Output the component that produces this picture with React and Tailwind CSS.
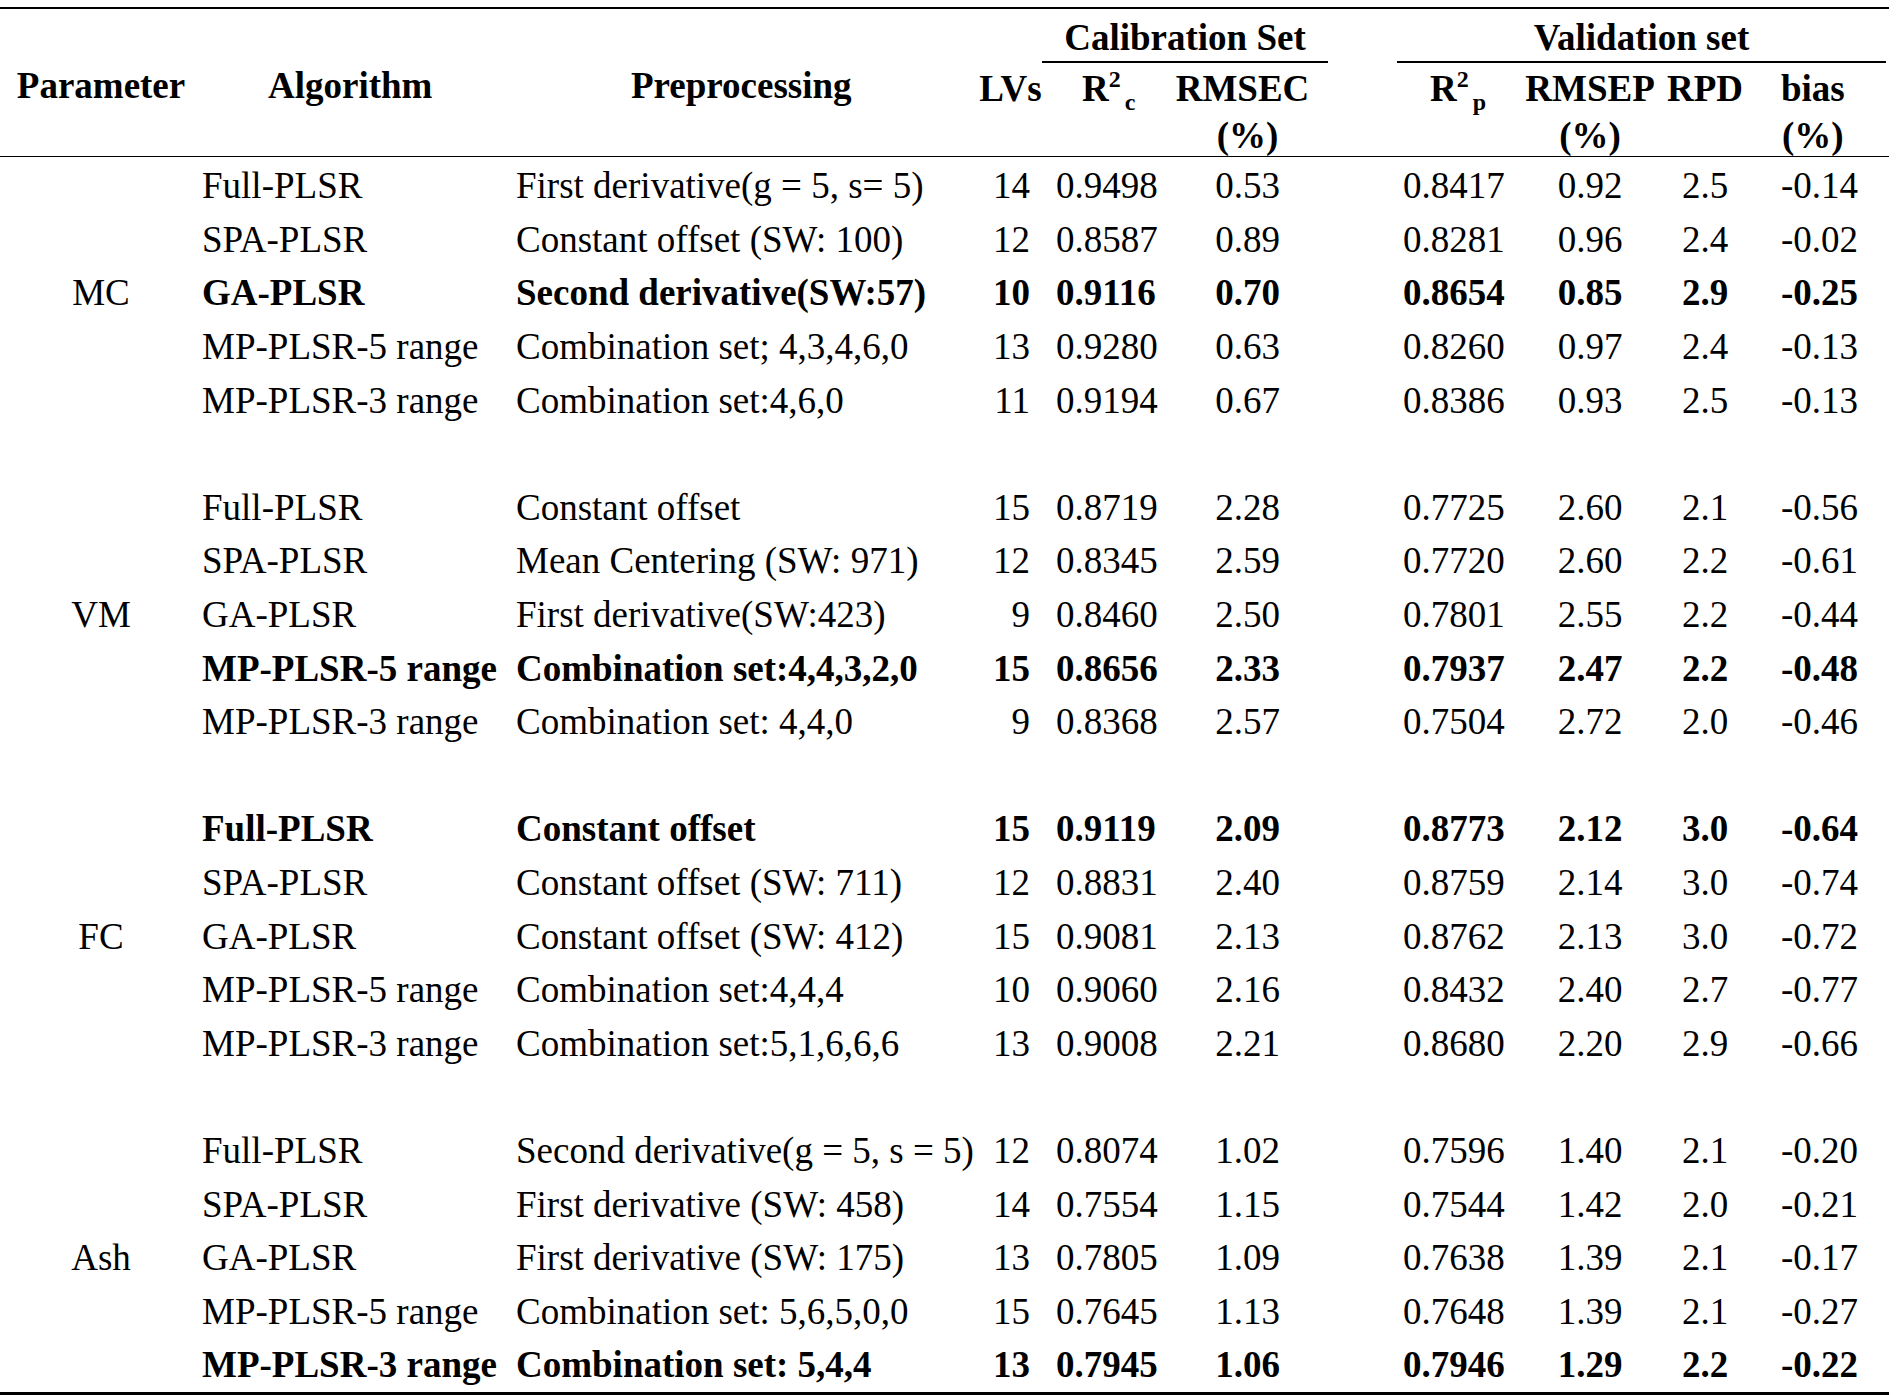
import React from 'react';

// table of PLSR results — Times-like serif, plain black rules
const GRID =
  'grid grid-cols-[202px_314px_469px_51px_139px_145px_77px_133px_120px_110px_129px]';

const groups = [
  {
    name: 'MC',
    rows: [
      ['Full-PLSR', 'First derivative(g = 5, s= 5)', '14', '0.9498', '0.53', '0.8417', '0.92', '2.5', '-0.14'],
      ['SPA-PLSR', 'Constant offset (SW: 100)', '12', '0.8587', '0.89', '0.8281', '0.96', '2.4', '-0.02'],
      ['GA-PLSR', 'Second derivative(SW:57)', '10', '0.9116', '0.70', '0.8654', '0.85', '2.9', '-0.25'],
      ['MP-PLSR-5 range', 'Combination set; 4,3,4,6,0', '13', '0.9280', '0.63', '0.8260', '0.97', '2.4', '-0.13'],
      ['MP-PLSR-3 range', 'Combination set:4,6,0', '11', '0.9194', '0.67', '0.8386', '0.93', '2.5', '-0.13'],
    ],
    bold: 2,
  },
  {
    name: 'VM',
    rows: [
      ['Full-PLSR', 'Constant offset', '15', '0.8719', '2.28', '0.7725', '2.60', '2.1', '-0.56'],
      ['SPA-PLSR', 'Mean Centering (SW: 971)', '12', '0.8345', '2.59', '0.7720', '2.60', '2.2', '-0.61'],
      ['GA-PLSR', 'First derivative(SW:423)', '9', '0.8460', '2.50', '0.7801', '2.55', '2.2', '-0.44'],
      ['MP-PLSR-5 range', 'Combination set:4,4,3,2,0', '15', '0.8656', '2.33', '0.7937', '2.47', '2.2', '-0.48'],
      ['MP-PLSR-3 range', 'Combination set: 4,4,0', '9', '0.8368', '2.57', '0.7504', '2.72', '2.0', '-0.46'],
    ],
    bold: 3,
  },
  {
    name: 'FC',
    rows: [
      ['Full-PLSR', 'Constant offset', '15', '0.9119', '2.09', '0.8773', '2.12', '3.0', '-0.64'],
      ['SPA-PLSR', 'Constant offset (SW: 711)', '12', '0.8831', '2.40', '0.8759', '2.14', '3.0', '-0.74'],
      ['GA-PLSR', 'Constant offset (SW: 412)', '15', '0.9081', '2.13', '0.8762', '2.13', '3.0', '-0.72'],
      ['MP-PLSR-5 range', 'Combination set:4,4,4', '10', '0.9060', '2.16', '0.8432', '2.40', '2.7', '-0.77'],
      ['MP-PLSR-3 range', 'Combination set:5,1,6,6,6', '13', '0.9008', '2.21', '0.8680', '2.20', '2.9', '-0.66'],
    ],
    bold: 0,
  },
  {
    name: 'Ash',
    rows: [
      ['Full-PLSR', 'Second derivative(g = 5, s = 5)', '12', '0.8074', '1.02', '0.7596', '1.40', '2.1', '-0.20'],
      ['SPA-PLSR', 'First derivative (SW: 458)', '14', '0.7554', '1.15', '0.7544', '1.42', '2.0', '-0.21'],
      ['GA-PLSR', 'First derivative (SW: 175)', '13', '0.7805', '1.09', '0.7638', '1.39', '2.1', '-0.17'],
      ['MP-PLSR-5 range', 'Combination set: 5,6,5,0,0', '15', '0.7645', '1.13', '0.7648', '1.39', '2.1', '-0.27'],
      ['MP-PLSR-3 range', 'Combination set: 5,4,4', '13', '0.7945', '1.06', '0.7946', '1.29', '2.2', '-0.22'],
    ],
    bold: 4,
  },
];

function Row({ param, r, bold }) {
  const [alg, pre, lv, r2c, rmsec, r2p, rmsep, rpd, bias] = r;
  return (
    <div className={`${GRID} h-[53.6px] items-center ${bold ? 'font-bold' : ''}`}>
      <div className="text-center font-normal">{param}</div>
      <div>{alg}</div>
      <div>{pre}</div>
      <div className="text-right pr-[6px]">{lv}</div>
      <div className="pl-[20px]">{r2c}</div>
      <div className="text-center">{rmsec}</div>
      <div />
      <div className="pl-[6px]">{r2p}</div>
      <div className="text-center">{rmsep}</div>
      <div className="text-center">{rpd}</div>
      <div className="pl-[21px]">{bias}</div>
    </div>
  );
}

function Blank() {
  return <div className="h-[53.6px]" />;
}

function RSub({ sub }) {
  return (
    <span>
      R
      <span className="relative top-[-14px] text-[24px]">2</span>
      <span className="relative top-[9px] text-[24px] pl-[4px]">{sub}</span>
    </span>
  );
}

export default function App() {
  return (
    <div
      className="w-[1896px] h-[1395px] bg-white text-black text-[37px] leading-none whitespace-nowrap pt-[7px]"
      style={{ fontFamily: '"Liberation Serif", "Times New Roman", serif' }}
    >
      <div className="w-[1889px] border-t-2 border-b-[3px] border-black">
        {/* header line 1 — set titles */}
        <div className="flex h-[54px] font-bold">
          <div className="w-[1042px]" />
          <div className="w-[286px] border-b-2 border-black flex items-center justify-center pt-[5px]">
            Calibration Set
          </div>
          <div className="w-[69px]" />
          <div className="w-[489px] border-b-2 border-black flex items-center justify-center pt-[5px]">
            Validation set
          </div>
        </div>

        {/* header line 2 — column labels */}
        <div className={`${GRID} h-[94px] font-bold border-b border-black`}>
          <div className="flex flex-col">
            <div className="h-[44px] flex items-center justify-center">Parameter</div>
          </div>
          <div className="flex flex-col">
            <div className="h-[44px] flex items-center pl-[66px]">Algorithm</div>
          </div>
          <div className="flex flex-col">
            <div className="h-[44px] flex items-center pl-[115px]">Preprocessing</div>
          </div>
          <div className="flex flex-col">
            <div className="h-[50px] flex items-center justify-center">LVs</div>
          </div>
          <div className="flex flex-col">
            <div className="h-[50px] flex items-center pl-[46px]">
              <RSub sub="c" />
            </div>
          </div>
          <div className="flex flex-col items-center">
            <div className="h-[50px] flex items-center pr-[10px]">RMSEC</div>
            <div className="h-[44px] flex items-center">(%)</div>
          </div>
          <div />
          <div className="flex flex-col">
            <div className="h-[50px] flex items-center pl-[33px]">
              <RSub sub="p" />
            </div>
          </div>
          <div className="flex flex-col items-center">
            <div className="h-[50px] flex items-center">RMSEP</div>
            <div className="h-[44px] flex items-center">(%)</div>
          </div>
          <div className="flex flex-col items-center">
            <div className="h-[50px] flex items-center">RPD</div>
          </div>
          <div className="flex flex-col items-start pl-[21px]">
            <div className="flex flex-col items-center">
              <div className="h-[50px] flex items-center">bias</div>
              <div className="h-[44px] flex items-center">(%)</div>
            </div>
          </div>
        </div>

        {/* body */}
        <div className="pt-[2px]">
          {groups.map((g, gi) => (
            <React.Fragment key={g.name}>
              {gi > 0 && <Blank />}
              {g.rows.map((r, i) => (
                <Row key={i} r={r} bold={i === g.bold} param={i === 2 ? g.name : ''} />
              ))}
            </React.Fragment>
          ))}
        </div>
      </div>
    </div>
  );
}
